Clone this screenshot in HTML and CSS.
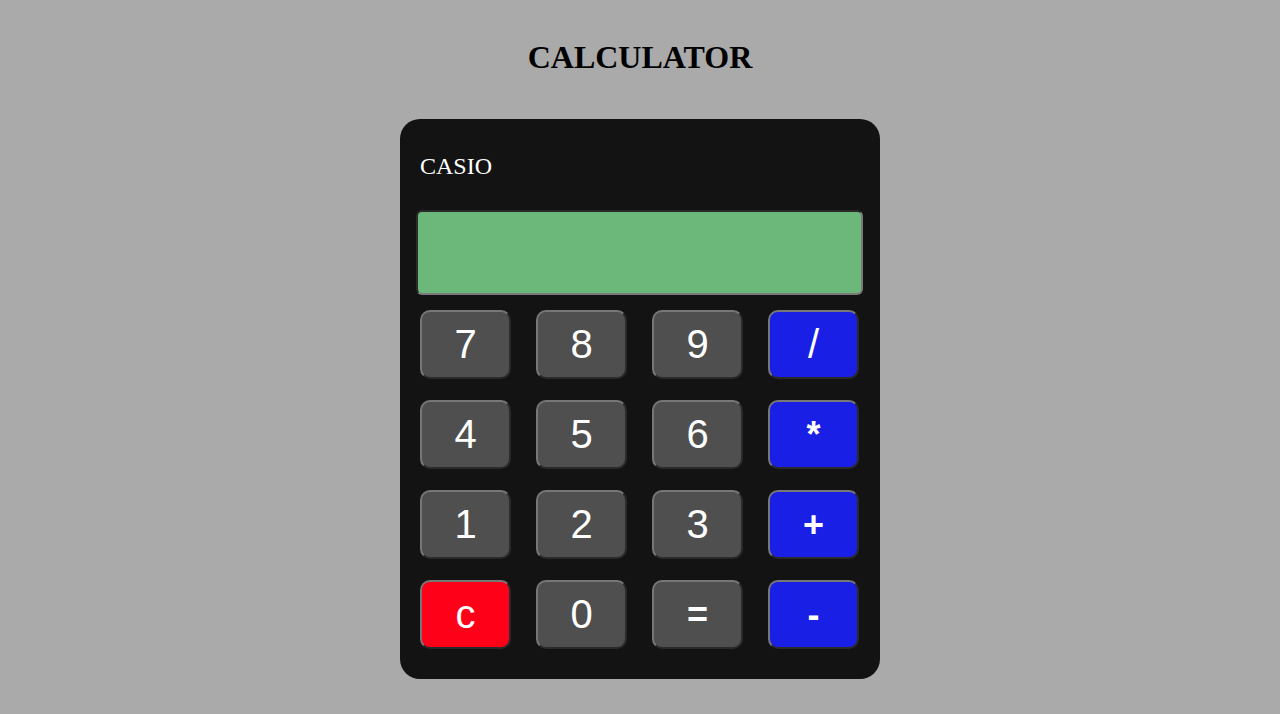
FILE: index.html
```html
<!DOCTYPE html>
<html>
<head>
<meta charset="utf-8">
<link rel="stylesheet" href="styles.css">
</head>
<body>
<h1 class="title">CALCULATOR</h1>
<div class="calc">
  <div class="brand">CASIO</div>
  <div class="display"></div>
  <div class="keys">
    <div class="key">7</div>
    <div class="key">8</div>
    <div class="key">9</div>
    <div class="key op">/</div>
    <div class="key">4</div>
    <div class="key">5</div>
    <div class="key">6</div>
    <div class="key op sym">*</div>
    <div class="key">1</div>
    <div class="key">2</div>
    <div class="key">3</div>
    <div class="key op sym">+</div>
    <div class="key clear">c</div>
    <div class="key">0</div>
    <div class="key sym">=</div>
    <div class="key op sym">-</div>
  </div>
</div>
</body>
</html>
```
FILE: styles.css
```css
html, body {
  margin: 0;
  padding: 0;
  background: #aaaaaa;
}
body {
  height: 714px;
  overflow: hidden;
}
.title {
  font-family: "Liberation Serif", serif;
  font-weight: bold;
  font-size: 32px;
  line-height: 37px;
  text-align: center;
  margin: 39px 0 43px;
  color: #000;
}
.calc {
  width: 480px;
  height: 560px;
  box-sizing: border-box;
  margin: 0 auto;
  background: #131313;
  border-radius: 20px;
  padding: 33px 17px 0 16px;
}
.brand {
  font-family: "Liberation Serif", serif;
  font-size: 24px;
  line-height: 28px;
  color: #fff;
  padding-left: 4px;
}
.display {
  margin-top: 30px;
  height: 85px;
  box-sizing: border-box;
  background: #6cb77a;
  border: 2px solid;
  border-color: #2a2a2a #7a7a7a #7a7a7a #2a2a2a;
  border-radius: 6px;
}
.keys {
  display: grid;
  grid-template-columns: repeat(4, 91px);
  grid-auto-rows: 69px;
  column-gap: 25px;
  row-gap: 21px;
  padding: 15px 0 0 4px;
}
.key {
  box-sizing: border-box;
  background: #4f4f4f;
  border: 2px solid;
  border-color: #777777 #2a2a2a #2a2a2a #777777;
  border-radius: 10px;
  color: #fff;
  font-family: "Liberation Sans", Arial, sans-serif;
  font-size: 40px;
  display: flex;
  align-items: center;
  justify-content: center;
}
.key.sym {
  font-weight: bold;
  font-size: 36px;
}
.key.op {
  background: #1a1fe5;
}
.key.clear {
  background: #ff0019;
}
```
